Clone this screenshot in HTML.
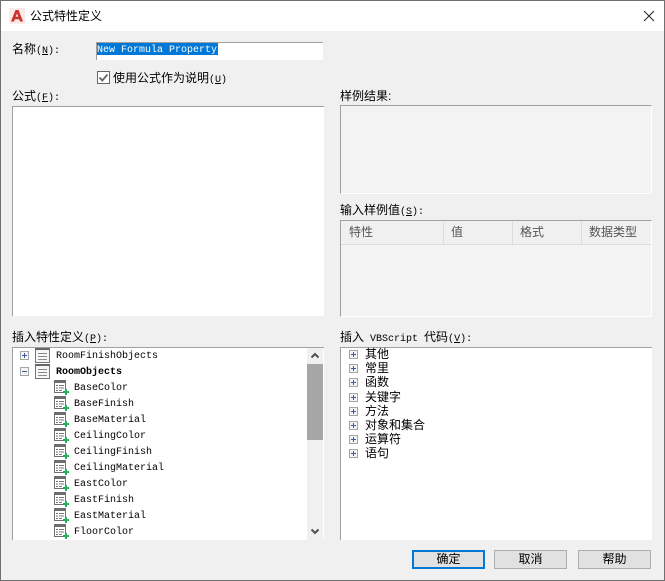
<!DOCTYPE html>
<html lang="zh">
<head>
<meta charset="utf-8">
<title>公式特性定义</title>
<style>
html,body{margin:0;padding:0;background:#f0f0f0}
#w{position:relative;width:665px;height:581px;overflow:hidden;background:#f0f0f0;font-family:"Liberation Sans","WenQuanYi Zen Hei","Noto Sans CJK SC",sans-serif;font-size:12px;color:#000}
#w *{box-sizing:border-box}
.a{position:absolute}
.t{position:absolute;white-space:nowrap;line-height:14px;font-size:12px}
.m{font-family:"Liberation Mono","WenQuanYi Zen Hei",monospace;font-size:10px;letter-spacing:0;white-space:pre}
u{text-decoration:underline}
.box{position:absolute;background:#fff;border-top:1px solid #a0a0a0;border-left:1px solid #a0a0a0}
.gbox{position:absolute;background:#f3f3f3;border-top:1px solid #a0a0a0;border-left:1px solid #a0a0a0;border-right:1px solid #fff;border-bottom:1px solid #fff}
.btn{position:absolute;top:550px;width:73px;height:19px;background:#e1e1e1;border:1px solid #adadad;text-align:center;line-height:17px;font-size:12px}
.r{position:absolute;white-space:nowrap;font-family:"Liberation Mono",monospace;font-size:10px;line-height:16px;height:16px}
.v{position:absolute;left:365px;white-space:nowrap;font-size:12px;line-height:14px;height:14px}
svg{position:absolute;display:block;overflow:visible}
.h{position:absolute;line-height:14px;font-size:12px;color:#555}
</style>
</head>
<body>
<div id="w">
<svg width="0" height="0" style="position:absolute">
<defs>
<symbol id="it" viewBox="0 0 16 16" width="16" height="16">
<rect x=".5" y=".5" width="11" height="12" fill="#fff" stroke="#6e6e6e"/>
<rect x="0" y="0" width="12" height="3" fill="#6e6e6e"/>
<path d="M2 5.500h2M5 5.500h5M2 8h2M5 8h5M2 10.500h2M5 10.500h3" stroke="#777" stroke-width="1" fill="none"/>
<path d="M9 12h6M12 9v6" stroke="#1fb257" stroke-width="2" fill="none"/>
</symbol>
<symbol id="doc" viewBox="0 0 15 15" width="15" height="15">
<rect x=".5" y=".5" width="14" height="14" fill="#f6f6f6" stroke="#777"/>
<rect x="0" y="0" width="15" height="2" fill="#666"/>
<path d="M3 5.500h9M3 8.500h9M3 11.500h9" stroke="#8a8a8a" fill="none"/>
</symbol>
<symbol id="pl" viewBox="0 0 9 9" width="9" height="9">
<rect x=".5" y=".5" width="8" height="8" fill="#f4f4f4" stroke="#a5a5a5"/>
<path d="M2 4.500h5M4.500 2v5" stroke="#3a5a9c" fill="none"/>
</symbol>
<symbol id="mi" viewBox="0 0 9 9" width="9" height="9">
<rect x=".5" y=".5" width="8" height="8" fill="#f4f4f4" stroke="#a5a5a5"/>
<path d="M2 4.500h5" stroke="#3a5a9c" fill="none"/>
</symbol>
</defs>
</svg>

<!-- title bar -->
<div class="a" style="left:0;top:0;width:665px;height:31px;background:#fff"></div>
<svg style="left:9px;top:8px" width="16" height="16" viewBox="0 0 16 16">
<rect width="16" height="16" fill="#fbe9e7"/>
<path d="M2 13.500 6.500 2h3L14 13.500h-3l-.8-2.200H5.800L5 13.500zM6.700 8.800h2.600L8 5.200z" fill="#c8312f"/>
</svg>
<div class="t" style="left:30px;top:9px;font-size:12px">公式特性定义</div>
<svg style="left:643px;top:10px" width="12" height="12" viewBox="0 0 12 12"><path d="M1 1l10 10M11 1L1 11" stroke="#222" stroke-width="1" fill="none"/></svg>

<!-- name -->
<div class="t" style="left:12px;top:42px">名称<span class="m">(<u>N</u>):</span></div>
<div class="a" style="left:96px;top:42px;width:227px;height:18px;background:#fff;border-top:1px solid #a0a0a0;border-left:1px solid #a0a0a0"></div>
<div class="a" style="left:97px;top:43px;width:121px;height:12px;background:#0078d7"></div>
<div class="t m" style="left:97px;top:44px;color:#fff">New Formula Property</div>

<!-- checkbox -->
<div class="a" style="left:97px;top:71px;width:13px;height:13px;background:#fff;border:1px solid #666"></div>
<svg style="left:97px;top:71px" width="13" height="13" viewBox="0 0 13 13"><path d="M2.500 6.500 5.300 9.500 10.500 3.500" stroke="#666" stroke-width="1.800" fill="none"/></svg>
<div class="t" style="left:113px;top:71px">使用公式作为说明<span class="m">(<u>U</u>)</span></div>

<!-- formula -->
<div class="t" style="left:12px;top:89px">公式<span class="m">(<u>F</u>):</span></div>
<div class="box" style="left:12px;top:106px;width:312px;height:210px"></div>

<!-- sample result -->
<div class="t" style="left:340px;top:89px">样例结果:</div>
<div class="gbox" style="left:340px;top:105px;width:312px;height:89px"></div>

<!-- sample values -->
<div class="t" style="left:340px;top:203px">输入样例值<span class="m">(<u>S</u>):</span></div>
<div class="gbox" style="left:340px;top:220px;width:312px;height:97px"></div>
<div class="a" style="left:341px;top:221px;width:310px;height:24px;background:#f0f0f0;border-bottom:1px solid #dcdcdc"></div>
<div class="a" style="left:443px;top:221px;width:1px;height:24px;background:#dcdcdc"></div>
<div class="a" style="left:512px;top:221px;width:1px;height:24px;background:#dcdcdc"></div>
<div class="a" style="left:581px;top:221px;width:1px;height:24px;background:#dcdcdc"></div>
<div class="h" style="left:349px;top:225px">特性</div>
<div class="h" style="left:451px;top:225px">值</div>
<div class="h" style="left:520px;top:225px">格式</div>
<div class="h" style="left:589px;top:225px">数据类型</div>

<!-- left tree -->
<div class="t" style="left:12px;top:330px">插入特性定义<span class="m">(<u>P</u>):</span></div>
<div class="box" style="left:12px;top:347px;width:312px;height:193px"></div>
<svg style="left:20px;top:351px" width="9" height="9"><use href="#pl"/></svg>
<svg style="left:20px;top:367px" width="9" height="9"><use href="#mi"/></svg>
<svg style="left:35px;top:348px" width="15" height="15"><use href="#doc"/></svg>
<svg style="left:35px;top:364px" width="15" height="15"><use href="#doc"/></svg>
<div class="r" style="left:56px;top:349px">RoomFinishObjects</div>
<div class="r" style="left:56px;top:365px;font-weight:bold">RoomObjects</div>

<svg style="left:54px;top:380px" width="16" height="16"><use href="#it"/></svg>
<div class="r" style="left:74px;top:381px">BaseColor</div>
<svg style="left:54px;top:396px" width="16" height="16"><use href="#it"/></svg>
<div class="r" style="left:74px;top:397px">BaseFinish</div>
<svg style="left:54px;top:412px" width="16" height="16"><use href="#it"/></svg>
<div class="r" style="left:74px;top:413px">BaseMaterial</div>
<svg style="left:54px;top:428px" width="16" height="16"><use href="#it"/></svg>
<div class="r" style="left:74px;top:429px">CeilingColor</div>
<svg style="left:54px;top:444px" width="16" height="16"><use href="#it"/></svg>
<div class="r" style="left:74px;top:445px">CeilingFinish</div>
<svg style="left:54px;top:460px" width="16" height="16"><use href="#it"/></svg>
<div class="r" style="left:74px;top:461px">CeilingMaterial</div>
<svg style="left:54px;top:476px" width="16" height="16"><use href="#it"/></svg>
<div class="r" style="left:74px;top:477px">EastColor</div>
<svg style="left:54px;top:492px" width="16" height="16"><use href="#it"/></svg>
<div class="r" style="left:74px;top:493px">EastFinish</div>
<svg style="left:54px;top:508px" width="16" height="16"><use href="#it"/></svg>
<div class="r" style="left:74px;top:509px">EastMaterial</div>
<svg style="left:54px;top:524px" width="16" height="16"><use href="#it"/></svg>
<div class="r" style="left:74px;top:525px">FloorColor</div>

<!-- scrollbar -->
<div class="a" style="left:307px;top:348px;width:16px;height:192px;background:#f0f0f0"></div>
<div class="a" style="left:307px;top:364px;width:16px;height:76px;background:#a6a6a6"></div>
<svg style="left:310px;top:352px" width="10" height="7" viewBox="0 0 10 7"><path d="M1.500 5.500 5 2l3.500 3.500" stroke="#505050" stroke-width="2" fill="none"/></svg>
<svg style="left:310px;top:528px" width="10" height="7" viewBox="0 0 10 7"><path d="M1.500 1.500 5 5l3.500-3.500" stroke="#505050" stroke-width="2" fill="none"/></svg>
<div class="a" style="left:0;top:540px;width:340px;height:8px;background:#f0f0f0"></div>

<!-- right tree -->
<div class="t" style="left:340px;top:330px">插入<span class="m"> VBScript </span>代码<span class="m">(<u>V</u>):</span></div>
<div class="box" style="left:340px;top:347px;width:312px;height:193px"></div>
<svg style="left:349px;top:350px" width="9" height="9"><use href="#pl"/></svg>
<svg style="left:349px;top:364px" width="9" height="9"><use href="#pl"/></svg>
<svg style="left:349px;top:378px" width="9" height="9"><use href="#pl"/></svg>
<svg style="left:349px;top:393px" width="9" height="9"><use href="#pl"/></svg>
<svg style="left:349px;top:407px" width="9" height="9"><use href="#pl"/></svg>
<svg style="left:349px;top:421px" width="9" height="9"><use href="#pl"/></svg>
<svg style="left:349px;top:435px" width="9" height="9"><use href="#pl"/></svg>
<svg style="left:349px;top:449px" width="9" height="9"><use href="#pl"/></svg>
<div class="v" style="top:347px">其他</div>
<div class="v" style="top:361px">常里</div>
<div class="v" style="top:375px">函数</div>
<div class="v" style="top:390px">关键字</div>
<div class="v" style="top:404px">方法</div>
<div class="v" style="top:418px">对象和集合</div>
<div class="v" style="top:432px">运算符</div>
<div class="v" style="top:446px">语句</div>

<!-- buttons -->
<div class="btn" style="left:412px;border:2px solid #0078d7;line-height:15px">确定</div>
<div class="btn" style="left:494px">取消</div>
<div class="btn" style="left:578px">帮助</div>

<!-- window border -->
<div class="a" style="left:0;top:0;width:665px;height:581px;border:1px solid #707070;pointer-events:none"></div>
</div>
</body>
</html>
